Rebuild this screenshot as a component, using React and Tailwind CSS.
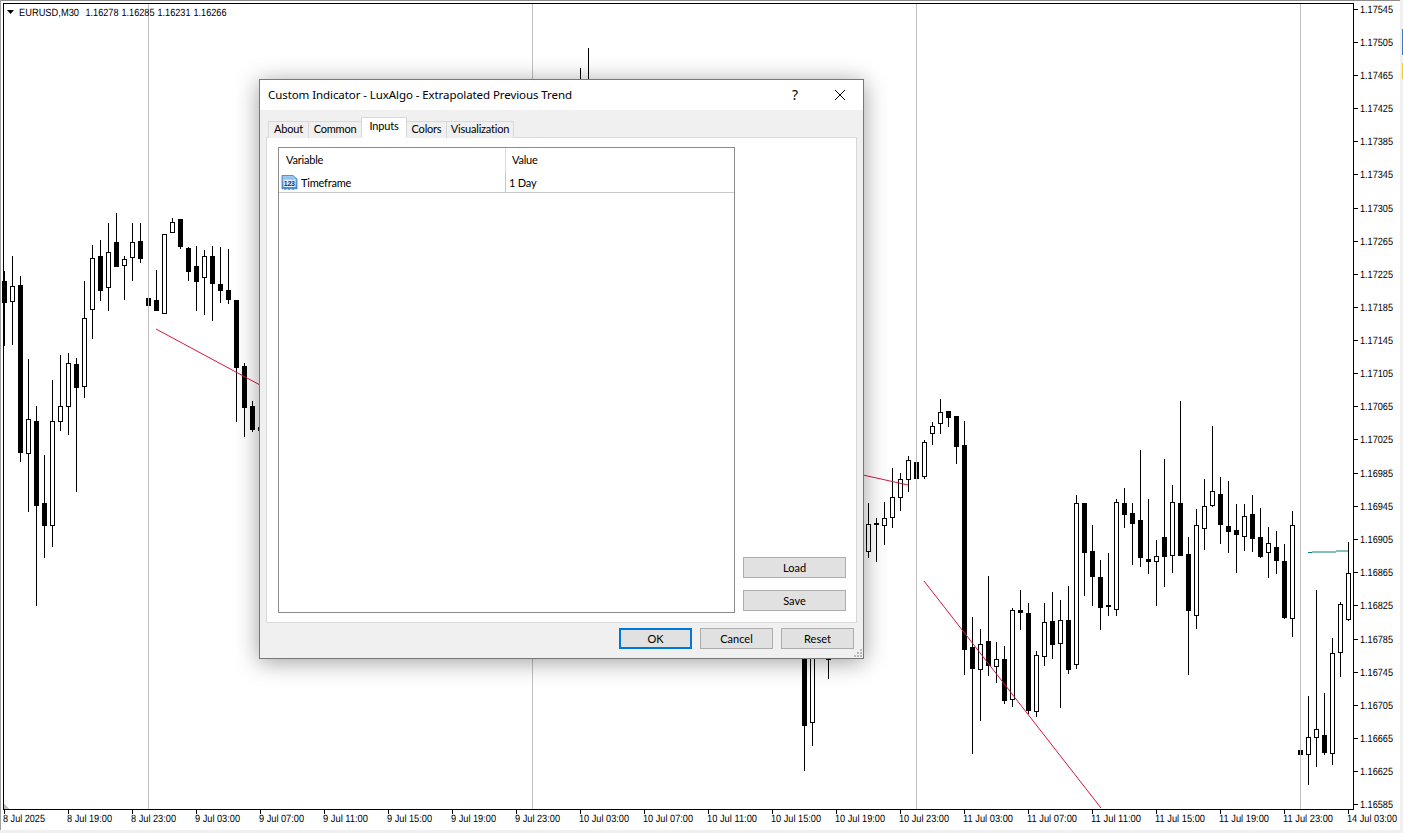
import React from 'react';

// x of the candle's wick, high, low, body top, body bottom, filled
const candles = [
  [4, 271, 346, 281, 303, 1], [12, 256, 345, 286, 302, 0], [20, 276, 462, 285, 453, 1], [28, 359, 512, 419, 454, 0],
  [36, 406, 606, 421, 506, 1], [44, 455, 558, 503, 526, 1], [52, 380, 547, 421, 526, 0], [60, 355, 431, 406, 422, 0],
  [68, 353, 435, 363, 407, 0], [76, 358, 492, 364, 388, 1], [84, 281, 398, 318, 387, 0], [92, 245, 339, 258, 310, 0],
  [100, 240, 301, 256, 291, 1], [108, 223, 311, 252, 288, 0], [116, 213, 267, 242, 267, 1], [124, 256, 300, 259, 266, 0],
  [132, 223, 281, 242, 258, 0], [140, 223, 263, 241, 259, 1], [148, 298, 306, 298, 306, 1], [156, 270, 311, 300, 311, 1],
  [164, 234, 314, 234, 314, 0], [172, 218, 233, 222, 233, 0], [180, 219, 249, 219, 247, 1], [188, 247, 281, 248, 272, 1],
  [196, 246, 311, 266, 282, 1], [204, 250, 315, 256, 278, 0], [212, 246, 321, 256, 284, 1], [220, 247, 303, 284, 291, 1],
  [228, 249, 304, 290, 300, 1], [236, 300, 422, 300, 368, 1], [244, 363, 437, 366, 408, 1], [252, 401, 432, 406, 430, 1],
  [260, 427, 431, 427, 431, 0],
  [580, 68, 90, 90, 100, 1], [588, 48, 90, 90, 100, 1],
  [804, 640, 771, 640, 726, 1], [812, 640, 746, 640, 723, 0], [828, 640, 679, 650, 660, 0],
  [868, 503, 558, 524, 552, 0], [876, 518, 562, 523, 525, 1], [884, 502, 545, 518, 526, 0], [892, 468, 528, 497, 518, 0],
  [900, 473, 511, 479, 498, 0], [908, 456, 492, 460, 480, 0], [916, 462, 479, 462, 479, 1], [924, 440, 479, 442, 477, 0],
  [932, 422, 445, 426, 434, 0], [940, 399, 434, 412, 424, 0], [948, 411, 427, 411, 418, 1], [956, 416, 464, 416, 447, 1],
  [964, 421, 675, 445, 650, 1], [972, 617, 754, 647, 669, 1], [980, 629, 721, 644, 670, 0], [988, 576, 676, 641, 666, 1],
  [996, 642, 683, 659, 667, 0], [1004, 646, 704, 659, 701, 1], [1012, 608, 707, 610, 700, 0], [1020, 590, 630, 610, 613, 1],
  [1028, 603, 714, 613, 711, 1], [1036, 651, 717, 655, 712, 0], [1044, 603, 666, 622, 657, 0], [1052, 592, 659, 621, 645, 1],
  [1060, 600, 708, 620, 644, 0], [1068, 586, 674, 620, 670, 1], [1076, 495, 669, 503, 665, 0], [1084, 503, 596, 503, 553, 1],
  [1092, 525, 606, 551, 577, 1], [1100, 560, 630, 577, 608, 1], [1108, 553, 616, 605, 607, 1], [1116, 499, 616, 502, 610, 0],
  [1124, 488, 528, 503, 515, 1], [1132, 503, 565, 513, 524, 1], [1140, 450, 567, 520, 558, 1], [1148, 499, 574, 559, 562, 1],
  [1156, 540, 606, 556, 562, 0], [1164, 459, 587, 537, 557, 1], [1172, 485, 573, 502, 556, 0], [1180, 401, 556, 503, 556, 1],
  [1188, 537, 675, 554, 611, 1], [1196, 509, 629, 525, 616, 0], [1204, 479, 550, 506, 529, 0], [1212, 426, 507, 491, 506, 0],
  [1220, 477, 544, 494, 525, 1], [1228, 481, 553, 526, 532, 1], [1236, 504, 573, 530, 535, 1], [1244, 504, 551, 516, 537, 0],
  [1252, 495, 552, 514, 539, 1], [1260, 508, 558, 537, 557, 1], [1268, 527, 578, 543, 553, 0], [1276, 531, 574, 547, 561, 1],
  [1284, 544, 619, 561, 618, 1], [1292, 511, 637, 525, 619, 0], [1300, 750, 755, 750, 755, 1], [1308, 696, 785, 737, 755, 0],
  [1316, 590, 767, 729, 738, 0], [1324, 693, 755, 735, 753, 1], [1332, 638, 765, 653, 754, 0], [1340, 602, 677, 604, 653, 0],
  [1348, 542, 621, 573, 620, 0],
];

const prices = [
  [1.17545, 9], [1.17505, 42], [1.17465, 75], [1.17425, 108], [1.17385, 141], [1.17345, 174], [1.17305, 208], [1.17265, 241],
  [1.17225, 274], [1.17185, 307], [1.17145, 340], [1.17105, 373], [1.17065, 406], [1.17025, 439], [1.16985, 473], [1.16945, 506],
  [1.16905, 539], [1.16865, 572], [1.16825, 605], [1.16785, 639], [1.16745, 672], [1.16705, 705], [1.16665, 738], [1.16625, 771],
  [1.16585, 804],
];

const times = [
  '8 Jul 2025', '8 Jul 19:00', '8 Jul 23:00', '9 Jul 03:00', '9 Jul 07:00', '9 Jul 11:00', '9 Jul 15:00', '9 Jul 19:00',
  '9 Jul 23:00', '10 Jul 03:00', '10 Jul 07:00', '10 Jul 11:00', '10 Jul 15:00', '10 Jul 19:00', '10 Jul 23:00', '11 Jul 03:00',
  '11 Jul 07:00', '11 Jul 11:00', '11 Jul 15:00', '11 Jul 19:00', '11 Jul 23:00', '14 Jul 03:00',
];

const tabs = [
  { name: 'About', className: 'w-[41px] h-[17px] border-l bg-[#f0f0f0] pb-[2px]' },
  { name: 'Common', className: 'w-[53px] h-[17px] bg-[#f0f0f0] pb-[2px]' },
  { name: 'Inputs', className: 'w-[46px] h-[21px] -ml-px border-l border-b border-b-white bg-white pb-[2px] relative' },
  { name: 'Colors', className: 'w-[40px] h-[17px] bg-[#f0f0f0] pb-[2px]' },
  { name: 'Visualization', className: 'w-[67px] h-[17px] bg-[#f0f0f0] pb-[2px]' },
];

const Chart = () => (
  <svg width="1403" height="833" className="absolute inset-0" shapeRendering="crispEdges" fontFamily="'Liberation Sans', sans-serif" fontSize="10.5">
    <rect x="0" y="0" width="1403" height="1" fill="#8c8c8c" />
    <rect x="0" y="0" width="1" height="830" fill="#a0a0a0" />
    <rect x="0" y="830" width="1403" height="3" fill="#f0f0f0" />
    <rect x="1400" y="0" width="3" height="833" fill="#f0f0f0" />
    <rect x="1402" y="29" width="1" height="26" fill="#3a78c0" />
    <rect x="1402" y="63" width="1" height="16" fill="#f0c820" />

    {candles.map(([x, high, low, top, bottom, filled]) => (
      <g key={x}>
        <rect x={x} y={high} width="1" height={low - high} fill="#000" />
        {filled ? (
          <rect x={x - 2} y={top} width="5" height={bottom - top} fill="#000" />
        ) : (
          <rect x={x - 1.5} y={top + 0.5} width="4" height={bottom - top - 1} fill="#fff" stroke="#000" />
        )}
      </g>
    ))}

    {[148, 532, 916, 1300].map((x) => (
      <rect key={x} x={x} y="4" width="1" height="805" fill="#c0c0c0" />
    ))}

    <g shapeRendering="auto" fill="none" strokeWidth="1">
      <path d="M156 329L260 385" stroke="#dc143c" />
      <path d="M863 475L908 485" stroke="#dc143c" />
      <path d="M924 581L1101 808" stroke="#dc143c" />
      <path d="M1308 552.5H1312M1312 552H1336M1336 551H1348" stroke="#008080" />
    </g>

    <path d="M4 804L9 809H4Z" fill="#c0c0c0" />
    <rect x="3" y="3" width="1351" height="1" fill="#000" />
    <rect x="3" y="3" width="1" height="807" fill="#000" />
    <rect x="3" y="809" width="1351" height="1" fill="#000" />
    <rect x="1353" y="3" width="1" height="807" fill="#000" />

    <path d="M7 10H14L10.5 14Z" fill="#000" shapeRendering="auto" />
    <g fill="#000" shapeRendering="auto" textRendering="geometricPrecision">
      <text x="19" y="15.5" textLength="60" lengthAdjust="spacingAndGlyphs">EURUSD,M30</text>
      <text x="85.5" y="15.5" textLength="33" lengthAdjust="spacingAndGlyphs">1.16278</text>
      <text x="121.5" y="15.5" textLength="33" lengthAdjust="spacingAndGlyphs">1.16285</text>
      <text x="157.5" y="15.5" textLength="33" lengthAdjust="spacingAndGlyphs">1.16231</text>
      <text x="193.5" y="15.5" textLength="33" lengthAdjust="spacingAndGlyphs">1.16266</text>
      {prices.map(([price, y]) => (
        <text key={price} x="1360" y={y + 4} textLength="33" lengthAdjust="spacingAndGlyphs">{price.toFixed(5)}</text>
      ))}
      {times.map((label, i) => (
        <text key={label} x={3 + 64 * i} y="822" textLength={label.length > 11 ? 50 : label.length > 10 ? 45 : 42} lengthAdjust="spacingAndGlyphs">{label}</text>
      ))}
    </g>

    {prices.map(([price, y]) => (
      <rect key={price} x="1354" y={y} width="4" height="1" fill="#000" />
    ))}
    {times.map((label, i) => (
      <rect key={label} x={4 + 64 * i} y="810" width="1" height="4" fill="#000" />
    ))}
  </svg>
);

const ParamIcon = () => (
  <svg width="17" height="17" viewBox="0 0 17 17">
    <defs>
      <linearGradient id="paramFill" x1="0" y1="0" x2="0" y2="1">
        <stop offset="0" stopColor="#a8ccf0" />
        <stop offset="1" stopColor="#3f86d6" />
      </linearGradient>
    </defs>
    <path d="M1 1.5H12L16 5V15L14 14.5L12 15.5L10 14.5L8 15.5L6 14.5L4 15.5L2.5 14.5L1 15Z" fill="url(#paramFill)" stroke="#3f78b8" strokeWidth="0.8" />
    <rect x="2.5" y="5.5" width="12" height="7.5" fill="#dcebf9" />
    <text x="2.8" y="12" fontSize="7" fontWeight="700" fontFamily="'Liberation Sans', sans-serif" fill="#12305f" textLength="11" lengthAdjust="spacingAndGlyphs">123</text>
  </svg>
);

const Button = ({ children, className }) => (
  <button type="button" className={`h-[21px] border border-[#adadad] bg-[#e1e1e1] text-[11px] text-black leading-none ${className}`}>
    {children}
  </button>
);

const Dialog = () => (
  <div className="absolute left-[259px] top-[79px] w-[605px] h-[580px] flex flex-col border border-[#787878] bg-[#f0f0f0] shadow-[0_3px_22px_rgba(0,0,0,0.38)] font-['Lato',sans-serif] text-black">
    <div className="h-[30px] shrink-0 bg-white flex items-center pl-[8px] font-['Noto_Sans',sans-serif]">
      <span className="text-[11.5px] tracking-[-0.08px] flex-1">Custom Indicator - LuxAlgo - Extrapolated Previous Trend</span>
      <span className="w-[12px] text-center text-[14px] leading-none mr-[33px]">?</span>
      <svg width="12" height="12" viewBox="0 0 12 12" className="mr-[17px]">
        <path d="M1 1L11 11M11 1L1 11" stroke="#000" strokeWidth="1" fill="none" />
      </svg>
    </div>

    <div className="flex-1 flex flex-col px-[6px] pt-[7px] min-h-0">
      <div className="flex items-end h-[21px] pl-[2px] relative z-10 -mb-px">
        {tabs.map((tab) => (
          <div
            key={tab.name}
            className={`${tab.className} flex items-center justify-center text-[11px] tracking-[-0.2px] border-t border-r border-[#d9d9d9]`}
          >
            {tab.name}
          </div>
        ))}
      </div>

      <div className="flex-1 flex bg-white border border-[#d9d9d9] pt-[9px] pb-[9px] pl-[11px] pr-[10px] gap-[8px] min-h-0">
        <div className="w-[457px] flex flex-col border border-[#8c8c8c] bg-white text-[11px] tracking-[-0.2px]">
          <div className="h-[24px] flex items-center">
            <div className="w-[227px] pl-[7px] pt-[1px] border-r border-[#d9d9d9] h-full flex items-center">Variable</div>
            <div className="pl-[6px] pt-[1px]">Value</div>
          </div>
          <div className="h-[21px] flex items-center border-b border-[#c8c8c8]">
            <div className="w-[227px] pl-[2px] gap-[3px] border-r border-[#c8c8c8] h-full flex items-center">
              <ParamIcon />
              <span className="pt-[2px]">Timeframe</span>
            </div>
            <div className="pl-[3px] pt-[2px]">1 Day</div>
          </div>
        </div>

        <div className="flex-1 flex flex-col justify-end gap-[12px] pb-[2px]">
          <Button>Load</Button>
          <Button>Save</Button>
        </div>
      </div>
    </div>

    <div className="h-[35px] shrink-0 flex justify-end gap-[8px] pt-[5px] pr-[9px]">
      <button type="button" className="w-[73px] h-[21px] border-2 border-[#0078d7] bg-[#e1e1e1] text-[11px] leading-none">OK</button>
      <Button className="w-[73px]">Cancel</Button>
      <Button className="w-[73px]">Reset</Button>
    </div>

    <svg width="8" height="8" viewBox="0 0 8 8" className="absolute right-[1px] bottom-[1px]" shapeRendering="crispEdges">
      <path d="M6 0h2v2H6zM3 3h2v2H3zM6 3h2v2H6zM0 6h2v2H0zM3 6h2v2H3zM6 6h2v2H6z" fill="#b8b8b8" />
    </svg>
  </div>
);

const App = () => (
  <div className="relative w-[1403px] h-[833px] overflow-hidden bg-white">
    <Chart />
    <Dialog />
  </div>
);

export default App;
